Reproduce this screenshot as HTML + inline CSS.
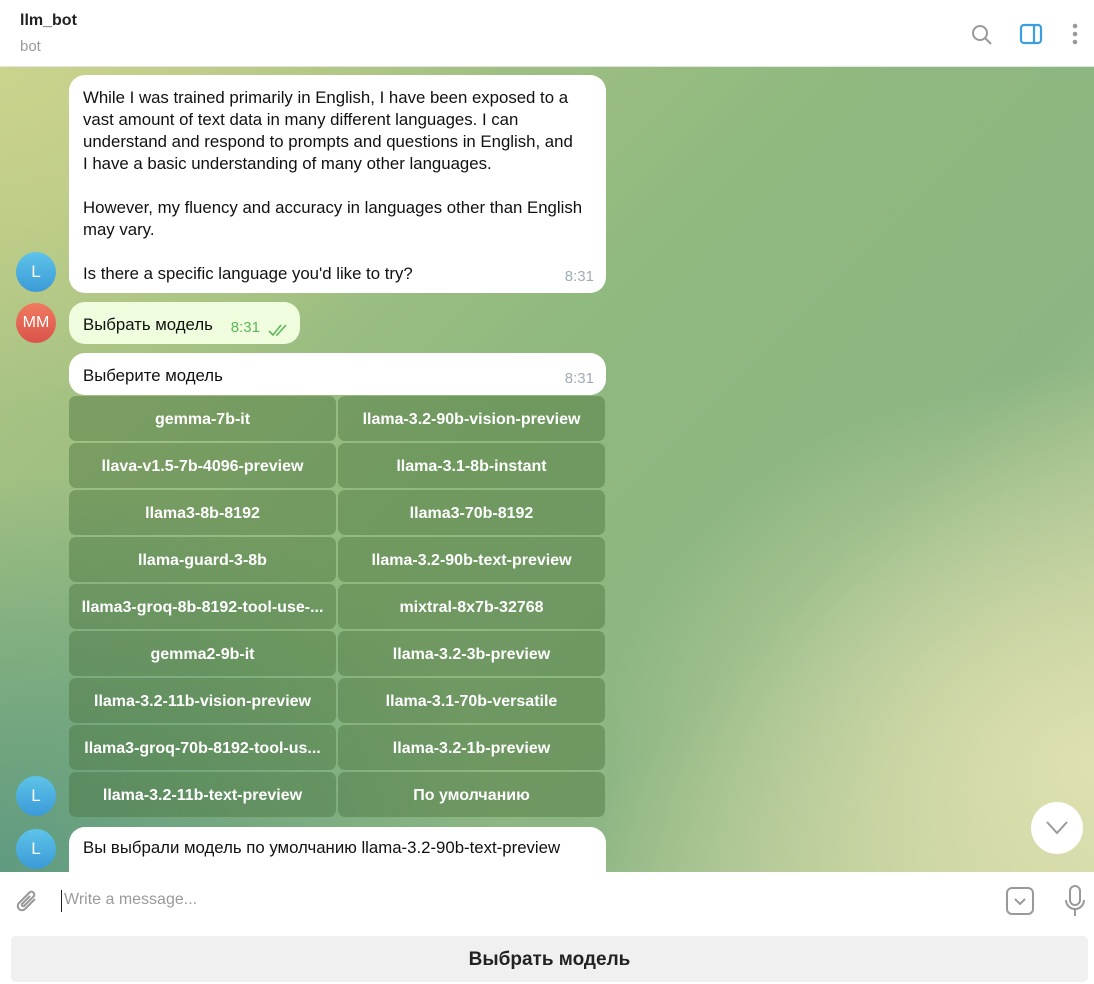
<!DOCTYPE html>
<html><head><meta charset="utf-8"><style>
*{margin:0;padding:0;box-sizing:border-box}
body{width:1094px;height:984px;overflow:hidden;font-family:"Liberation Sans","Noto Sans CJK SC",sans-serif;position:relative;background:#fff}
.hdr{position:absolute;left:0;top:0;width:1094px;height:67px;background:#fff;border-bottom:1px solid #e4e4e4}
.hdr .t{position:absolute;left:20px;top:12px;font-size:16px;font-weight:bold;color:#222}
.hdr .s{position:absolute;left:20px;top:38px;font-size:15px;color:#999}
.chat{position:absolute;left:0;top:67px;width:1094px;height:805px;overflow:hidden;
background:radial-gradient(ellipse 500px 400px at 1094px 700px,#dfe0b0 0%,rgba(223,224,176,0) 100%),
radial-gradient(ellipse 500px 350px at 0px 0px,#cbd38c 0%,rgba(203,211,140,0) 100%),
radial-gradient(ellipse 500px 400px at 0px 805px,#5f9a80 0%,rgba(95,154,128,0) 100%),
linear-gradient(135deg,#b5c886 0%,#8fb97f 45%,#8bb583 70%,#c8d3a0 100%)}
.b{position:absolute;background:#fff;border-radius:16px;font-size:16.8px;line-height:22px;color:#111;padding:12px 14px 8px;white-space:nowrap}
.tm{position:absolute;right:12px;bottom:5px;font-size:15px;color:#a0acb6}
.av{position:absolute;left:16px;width:40px;height:40px;border-radius:50%;color:#fff;font-size:17px;text-align:center;line-height:40px}
.L{background:linear-gradient(#5ec4e9,#3b9ad8)}
.btn{position:absolute;width:267px;height:45px;border-radius:7px;background:rgba(70,110,55,.42);color:#fff;font-size:16px;font-weight:bold;text-align:center;line-height:48px;white-space:nowrap;overflow:hidden}
.inp{position:absolute;left:0;top:872px;width:1094px;height:112px;background:#fff}
.kb{position:absolute;left:11px;top:936px;width:1077px;height:46px;background:#f0f0f0;border-radius:5px;text-align:center;line-height:48px;font-size:19px;font-weight:bold;color:#222}
</style></head><body>
<div class="hdr"><div class="t">llm_bot</div><div class="s">bot</div>
<svg style="position:absolute;left:970px;top:23px" width="24" height="24" viewBox="0 0 24 24" fill="none" stroke="#999" stroke-width="2"><circle cx="10" cy="10" r="7"/><path d="M15 15l6 6"/></svg>
<svg style="position:absolute;left:1019px;top:23px" width="24" height="22" viewBox="0 0 24 22" fill="none" stroke="#3a9ee0" stroke-width="2.2"><rect x="2" y="2" width="20" height="18" rx="3"/><path d="M15 2v18"/></svg>
<svg style="position:absolute;left:1070px;top:23px" width="10" height="22"><circle cx="5" cy="3" r="2.3" fill="#999"/><circle cx="5" cy="11" r="2.3" fill="#999"/><circle cx="5" cy="19" r="2.3" fill="#999"/></svg>
</div>
<div class="chat">
<div class="b" style="left:69px;top:8px;width:537px;height:218px">While I was trained primarily in English, I have been exposed to a<br>vast amount of text data in many different languages. I can<br>understand and respond to prompts and questions in English, and<br>I have a basic understanding of many other languages.<br><br>However, my fluency and accuracy in languages other than English<br>may vary.<br><br>Is there a specific language you'd like to try?<span class="tm">8:31</span></div>
<div class="av L" style="top:185px">L</div>
<div class="b" style="left:69px;top:235px;width:231px;height:42px;background:#effdde">Выбрать модель<span class="tm" style="right:40px;color:#5fb55a">8:31</span>
<svg style="position:absolute;right:10px;bottom:8px" width="22" height="12" viewBox="0 0 22 12" fill="none" stroke="#5fb55a" stroke-width="1.6"><path d="M1 7l4 4 8-10M8 11l1 0 9-10"/></svg></div>
<div class="av" style="top:236px;background:linear-gradient(#f07a5f,#d9534a);font-size:16px">MM</div>
<div class="b" style="left:69px;top:286px;width:537px;height:42px">Выберите модель<span class="tm">8:31</span></div>
<div class="btn" style="left:69px;top:329px">gemma-7b-it</div><div class="btn" style="left:338px;top:329px">llama-3.2-90b-vision-preview</div>
<div class="btn" style="left:69px;top:376px">llava-v1.5-7b-4096-preview</div><div class="btn" style="left:338px;top:376px">llama-3.1-8b-instant</div>
<div class="btn" style="left:69px;top:423px">llama3-8b-8192</div><div class="btn" style="left:338px;top:423px">llama3-70b-8192</div>
<div class="btn" style="left:69px;top:470px">llama-guard-3-8b</div><div class="btn" style="left:338px;top:470px">llama-3.2-90b-text-preview</div>
<div class="btn" style="left:69px;top:517px">llama3-groq-8b-8192-tool-use-...</div><div class="btn" style="left:338px;top:517px">mixtral-8x7b-32768</div>
<div class="btn" style="left:69px;top:564px">gemma2-9b-it</div><div class="btn" style="left:338px;top:564px">llama-3.2-3b-preview</div>
<div class="btn" style="left:69px;top:611px">llama-3.2-11b-vision-preview</div><div class="btn" style="left:338px;top:611px">llama-3.1-70b-versatile</div>
<div class="btn" style="left:69px;top:658px">llama3-groq-70b-8192-tool-us...</div><div class="btn" style="left:338px;top:658px">llama-3.2-1b-preview</div>
<div class="btn" style="left:69px;top:705px">llama-3.2-11b-text-preview</div><div class="btn" style="left:338px;top:705px">По умолчанию</div>
<div class="av L" style="top:709px">L</div>
<div class="b" style="left:69px;top:760px;width:537px;height:60px;padding-top:10px">Вы выбрали модель по умолчанию llama-3.2-90b-text-preview<span class="tm" style="bottom:-8px">8:31</span></div>
<div class="av L" style="top:762px">L</div>
<div style="position:absolute;left:1031px;top:735px;width:52px;height:52px;border-radius:50%;background:#fff"><svg style="position:absolute;left:15px;top:19px" width="22" height="14" viewBox="0 0 22 14" fill="none" stroke="#999" stroke-width="2"><path d="M1 1l10 11L21 1"/></svg></div>
</div>
<div class="inp">
<svg style="position:absolute;left:15px;top:16px" width="26" height="28" viewBox="0 0 26 28" fill="none" stroke="#999" stroke-width="2"><path d="M20 11L10 21a4 4 0 01-6-6L15 4a3 3 0 014 4L9 18a1.5 1.5 0 01-2-2l8-8"/></svg>
<div style="position:absolute;left:61px;top:18px;width:1px;height:22px;background:#222"></div>
<div style="position:absolute;left:64px;top:19px;font-size:16px;color:#9a9a9a">Write a message...</div>
<svg style="position:absolute;left:1006px;top:15px" width="28" height="28" viewBox="0 0 28 28" fill="none" stroke="#999" stroke-width="2"><rect x="1" y="1" width="26" height="26" rx="5"/><path d="M9 12l5 5 5-5"/></svg>
<svg style="position:absolute;left:1064px;top:13px" width="22" height="32" viewBox="0 0 22 32" fill="none" stroke="#999" stroke-width="2"><rect x="6" y="1" width="10" height="19" rx="5"/><path d="M2 15a9 9 0 0018 0M11 24v7"/></svg>
</div>
<div class="kb">Выбрать модель</div>
</body></html>
